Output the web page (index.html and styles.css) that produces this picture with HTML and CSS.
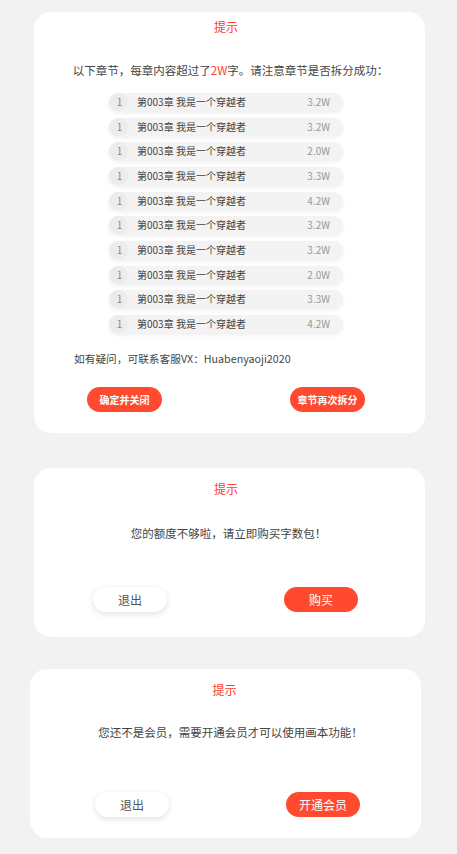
FILE: index.html
```html
<!DOCTYPE html>
<html lang="zh-CN">
<head>
<meta charset="utf-8">
<title>提示</title>
<link rel="stylesheet" href="styles.css">
</head>
<body>
<div class="page">
  <section class="card card-split">
    <div class="title">提示</div>
    <p class="msg msg-split">以下章节，每章内容超过了<span class="hl">2W</span>字。请注意章节是否拆分成功：</p>
    <ul class="rows">
      <li class="row"><span class="num">1</span><span class="name">第003章 我是一个穿越者</span><span class="count">3.2W</span></li>
      <li class="row"><span class="num">1</span><span class="name">第003章 我是一个穿越者</span><span class="count">3.2W</span></li>
      <li class="row"><span class="num">1</span><span class="name">第003章 我是一个穿越者</span><span class="count">2.0W</span></li>
      <li class="row"><span class="num">1</span><span class="name">第003章 我是一个穿越者</span><span class="count">3.3W</span></li>
      <li class="row"><span class="num">1</span><span class="name">第003章 我是一个穿越者</span><span class="count">4.2W</span></li>
      <li class="row"><span class="num">1</span><span class="name">第003章 我是一个穿越者</span><span class="count">3.2W</span></li>
      <li class="row"><span class="num">1</span><span class="name">第003章 我是一个穿越者</span><span class="count">3.2W</span></li>
      <li class="row"><span class="num">1</span><span class="name">第003章 我是一个穿越者</span><span class="count">2.0W</span></li>
      <li class="row"><span class="num">1</span><span class="name">第003章 我是一个穿越者</span><span class="count">3.3W</span></li>
      <li class="row"><span class="num">1</span><span class="name">第003章 我是一个穿越者</span><span class="count">4.2W</span></li>
    </ul>
    <p class="contact">如有疑问，可联系客服VX：Huabenyaoji2020</p>
    <div class="actions actions-split">
      <button class="btn btn-red btn-small">确定并关闭</button>
      <button class="btn btn-red btn-small">章节再次拆分</button>
    </div>
  </section>

  <section class="card card-quota">
    <div class="title">提示</div>
    <p class="msg msg-quota">您的额度不够啦，请立即购买字数包！</p>
    <div class="actions actions-quota">
      <button class="btn btn-white">退出</button>
      <button class="btn btn-red">购买</button>
    </div>
  </section>

  <section class="card card-vip">
    <div class="title title-vip">提示</div>
    <p class="msg msg-vip">您还不是会员，需要开通会员才可以使用画本功能！</p>
    <div class="actions actions-vip">
      <button class="btn btn-white">退出</button>
      <button class="btn btn-red">开通会员</button>
    </div>
  </section>
</div>
</body>
</html>
```

FILE: styles.css
```css
* { box-sizing: border-box; }

html, body {
  margin: 0;
  padding: 0;
  background: #f2f2f2;
}

body {
  font-family: "Noto Sans CJK SC", "Noto Sans", sans-serif;
  color: #333;
}

.page {
  padding-top: 12px;
  display: flex;
  flex-direction: column;
}

.card {
  background: #fff;
  border-radius: 17px;
  width: 391px;
  margin-left: 34px;
  display: flex;
  flex-direction: column;
}

.card-split { height: 421px; padding-top: 7px; }
.card-quota { height: 169px; margin-top: 35px; padding-top: 13px; }
.card-vip { height: 169px; margin-top: 32px; margin-left: 30px; padding-top: 13px; }

.title {
  text-align: center;
  color: #ff3b2b;
  font-size: 12px;
  line-height: 16px;
  padding-right: 7px;
}

.title-vip { padding-right: 2px; }

.msg {
  margin: 0;
  font-size: 11.5px;
  line-height: 16px;
  color: #444;
  text-align: center;
  white-space: nowrap;
}

.msg-split { margin-top: 27px; padding-left: 2px; }
.msg-quota { margin-top: 28px; padding-right: 2px; }
.msg-vip { margin-top: 26px; padding-left: 10px; }

.hl { color: #ff3b2b; }

.rows {
  list-style: none;
  margin: 15px 0 0 75px;
  padding: 0;
  display: flex;
  flex-direction: column;
  gap: 6.67px;
}

.row {
  width: 234px;
  height: 18px;
  border-radius: 9px;
  background: #f3f3f3;
  box-shadow: 0 2px 4px rgba(0, 0, 0, 0.07);
  display: flex;
  align-items: center;
  font-size: 10px;
  line-height: 18px;
}

.num {
  width: 19px;
  height: 18px;
  border-radius: 9px;
  background: #ececec;
  color: #888;
  text-align: center;
  padding-left: 2px;
}

.name {
  margin-left: 9px;
  color: #444;
  flex: 1;
}

.count {
  color: #999;
  margin-right: 13px;
}

.contact {
  margin: 18px 0 0 40px;
  font-size: 10.7px;
  line-height: 16px;
  color: #444;
}

.actions {
  display: flex;
  justify-content: space-between;
}

.actions-split { margin-top: 20px; padding: 0 60px 0 53px; }
.actions-quota { margin-top: 46px; padding: 0 67px 0 59px; }
.actions-vip { margin-top: 52px; padding: 0 61px 0 65px; }

.btn {
  border: 0;
  width: 74px;
  height: 25px;
  border-radius: 13px;
  font-family: inherit;
  font-size: 12px;
  line-height: 25px;
  padding: 0;
  cursor: pointer;
}

.btn-small {
  font-size: 10px;
  font-weight: 700;
  width: 75px;
}

.btn-red {
  background: #ff4a30;
  color: #fff;
}

.btn-white {
  background: #fff;
  color: #555;
  box-shadow: 0 2px 6px rgba(0, 0, 0, 0.12);
}
```
